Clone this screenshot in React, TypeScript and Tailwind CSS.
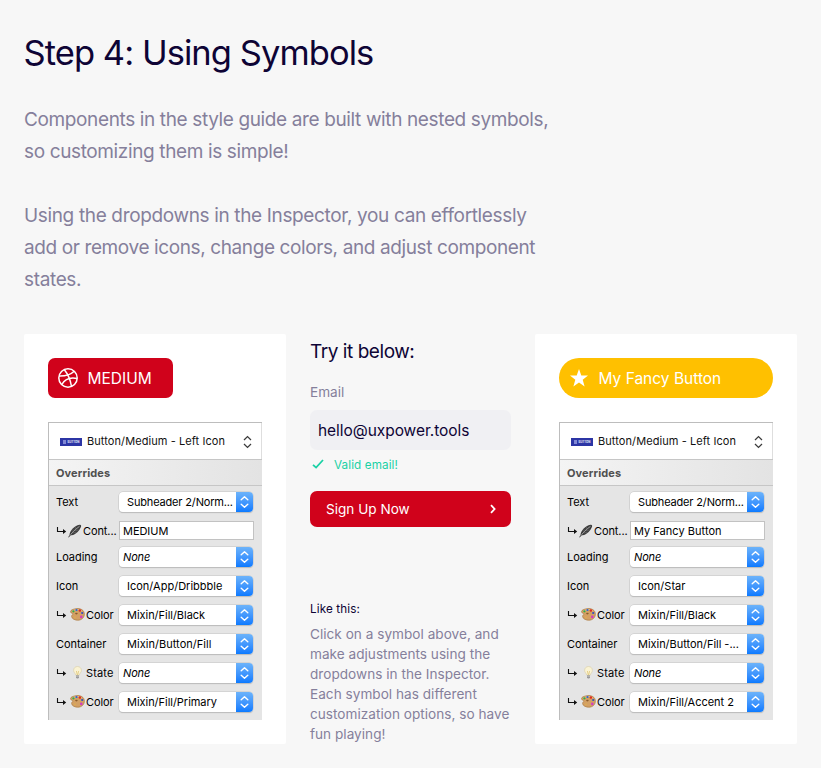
import type { ReactNode } from "react";

type Glyph = "feather" | "palette" | "bulb";

type Override = {
  label: string;
  value: string;
  glyph?: Glyph;
  kind?: "input" | "none";
  tracking?: string;
};

const buttonOverrides: Override[] = [
  { label: "Text", value: "Subheader 2/Norm...", tracking: "tracking-[-0.16px]" },
  { label: "Cont...", value: "MEDIUM", glyph: "feather", kind: "input", tracking: "tracking-[-0.05px]" },
  { label: "Loading", value: "None", kind: "none" },
  { label: "Icon", value: "Icon/App/Dribbble", tracking: "tracking-[0.01px]" },
  { label: "Color", value: "Mixin/Fill/Black", glyph: "palette" },
  { label: "Container", value: "Mixin/Button/Fill", tracking: "tracking-[0.04px]" },
  { label: "State", value: "None", glyph: "bulb", kind: "none" },
  { label: "Color", value: "Mixin/Fill/Primary", glyph: "palette" },
];

const fancyOverrides: Override[] = [
  { label: "Text", value: "Subheader 2/Norm...", tracking: "tracking-[-0.16px]" },
  { label: "Cont...", value: "My Fancy Button", glyph: "feather", kind: "input", tracking: "tracking-[0.03px]" },
  { label: "Loading", value: "None", kind: "none" },
  { label: "Icon", value: "Icon/Star", tracking: "tracking-[0.01px]" },
  { label: "Color", value: "Mixin/Fill/Black", glyph: "palette" },
  { label: "Container", value: "Mixin/Button/Fill -..." },
  { label: "State", value: "None", glyph: "bulb", kind: "none" },
  { label: "Color", value: "Mixin/Fill/Accent 2", glyph: "palette" },
];

function DribbbleIcon() {
  return (
    <svg width="20" height="20" viewBox="0 0 20 20" fill="none" stroke="#fff" strokeWidth="1.5">
      <circle cx="10" cy="10" r="9.2" />
      <path d="M6.4 1.7c3.4 4.3 5.9 9.7 7 16.3" />
      <path d="M1 8.1c6.200.2 11.400-1.200 15.200-4.800" />
      <path d="M3.700 16.600c3.100-5.200 8-7.600 15.400-6" />
    </svg>
  );
}

function StarIcon() {
  return (
    <svg width="20" height="20" viewBox="0 0 20 20" fill="#fff">
      <path d="M10 1l2.300 6.500 6.700.1-5.300 4.200 1.900 6.700L10 14.600l-5.600 3.900 1.900-6.700L1 7.600l6.700-.1z" />
    </svg>
  );
}

function CornerArrow() {
  return (
    <svg width="11" height="8" viewBox="0 0 11 8" className="shrink-0">
      <path d="M1.500 0v4.500h7" fill="none" stroke="#111" strokeWidth="1.100" />
      <path d="M7 2.100L10.200 4.500L7 6.900z" fill="#111" />
    </svg>
  );
}

function FeatherGlyph() {
  return (
    <svg width="14" height="14" viewBox="0 0 14 14" className="ml-px shrink-0">
      <path d="M1.500 11.500C1.500 7 6 1.800 11.500.700c1.600-.3 2 .8 1.400 2.300C11.500 6.500 8 10.600 3.500 11.300z" fill="#3c3c3c" />
      <path d="M.6 13.200C3 9.800 6.500 6 11.500 2.300" fill="none" stroke="#c8c8c8" strokeWidth=".7" />
      <path d="M.5 13.300l2-2.600" stroke="#333" strokeWidth=".9" />
      <path d="M5 8.800l3.500-.6M6.800 6.700l4-.7M4.800 8.500l.3-3.300M7 6.200l.6-3.100" stroke="#777" strokeWidth=".5" />
    </svg>
  );
}

function PaletteGlyph() {
  return (
    <svg width="15" height="13" viewBox="0 0 15 13" className="mb-[2px] ml-[3px] shrink-0">
      <path
        d="M6.500.6C10.500 0 14.400 2.200 14.400 6.200c0 3.400-2.900 6-6.600 6-3.100 0-6-1.400-6.200-3.700-.1-1.500 1.300-1.500 1.200-2.500C2.700 5 .5 5.300.5 3.700.5 2 3.500 1 6.500.6z"
        fill="#d3a064"
        stroke="#a47339"
        strokeWidth=".6"
      />
      <path d="M2 3.300C4 1.600 9 .8 12 3" fill="none" stroke="#eccb94" strokeWidth=".8" />
      <ellipse cx="6.400" cy="5.600" rx="1.300" ry=".8" fill="#8a5b2a" />
      <circle cx="3.400" cy="3.300" r="1.150" fill="#2fae4c" />
      <circle cx="6.500" cy="2" r="1.100" fill="#2b62d9" />
      <circle cx="9.900" cy="2.500" r="1.200" fill="#e02b22" />
      <circle cx="12.200" cy="5" r="1.100" fill="#2b4fc4" />
      <circle cx="11.300" cy="8.900" r="1.300" fill="#d43bc1" />
      <circle cx="5" cy="9.200" r=".8" fill="#e0b04c" />
    </svg>
  );
}

function BulbGlyph() {
  return (
    <svg width="9" height="13" viewBox="0 0 9 13" className="mr-[3px] mb-[2px] ml-[6px] shrink-0">
      <path d="M4.500.5C2.200.5.600 2.200.6 4.300c0 2.200 1.800 2.900 2.100 4.800h3.600c.3-1.900 2.100-2.600 2.100-4.800C8.400 2.200 6.800.5 4.500.5z" fill="#faf3d4" stroke="#d8cda4" strokeWidth=".6" />
      <path d="M3.400 5l.8 3.500h.6L5.600 5" fill="none" stroke="#d9b95a" strokeWidth=".6" />
      <path d="M3 9.200h3v2.100l-.8 1.100H3.800L3 11.300z" fill="#9b9b9b" />
      <path d="M3 10.300h3" stroke="#d5d5d5" strokeWidth=".5" />
    </svg>
  );
}

function OverrideLabel({ label, glyph }: { label: string; glyph?: Glyph }) {
  if (!glyph) {
    return <span className="w-[63px] shrink-0 tracking-[-0.04px] whitespace-nowrap">{label}</span>;
  }
  return (
    <span className="flex w-[63px] shrink-0 items-center whitespace-nowrap">
      <CornerArrow />
      {glyph === "feather" && <FeatherGlyph />}
      {glyph === "palette" && <PaletteGlyph />}
      {glyph === "bulb" && <BulbGlyph />}
      <span className={glyph === "feather" ? "ml-[1px] tracking-[-0.1px]" : glyph === "bulb" ? "ml-px tracking-[0.15px]" : "ml-px tracking-[-0.1px]"}>
        {label}
      </span>
    </span>
  );
}

function Row({ label, value, glyph, kind, tracking = "tracking-[-0.03px]" }: Override) {
  if (kind === "input") {
    return (
      <div className="mb-[7px] flex h-[19px] items-center">
        <OverrideLabel label={label} glyph={glyph} />
        <div className={`flex h-[19px] w-[135px] items-center border border-[#c2c2c2] bg-white pl-[3px] text-black ${tracking}`}>
          {value}
        </div>
      </div>
    );
  }
  return (
    <div className="mb-[9px] flex h-5 items-center">
      <OverrideLabel label={label} glyph={glyph} />
      <div className="flex h-5 w-[133.500px] overflow-hidden rounded-[4px] bg-white shadow-[0_0_0_0.5px_#c4c4c4,0_1px_1px_#b4b4b4]">
        <span
          className={`flex flex-1 items-center whitespace-nowrap text-black ${kind === "none" ? "pl-1 tracking-[-0.15px] italic" : `pl-2 ${tracking}`}`}
        >
          {value}
        </span>
        <span className="flex w-[16.500px] shrink-0 items-center justify-center bg-linear-to-b from-[#6cb3fa] to-[#087aff]">
          <svg width="9" height="14" viewBox="0 0 9 14" fill="none" stroke="#fff" strokeWidth="1.400">
            <path d="M1.200 4.700L4.500 1.700L7.800 4.700M1.200 9.300L4.500 12.300L7.800 9.300" strokeLinecap="round" strokeLinejoin="round" />
          </svg>
        </span>
      </div>
    </div>
  );
}

function Inspector({ overrides }: { overrides: Override[] }) {
  return (
    <div className="mt-6 h-[298px] w-[214px] border-t border-l border-[#bdbdbd] bg-[#e5e5e5] text-[11px] leading-[14px] text-black">
      <div className="flex h-9 items-center border-r border-[#dedede] bg-white pl-[11px]">
        <span className="mt-[2px] flex h-2 w-[22px] items-center justify-center gap-[2px] bg-[#2c35a5] text-[2.800px] leading-[8px] font-bold text-[#eceefc]">
          <svg width="3" height="4" viewBox="0 0 3 4">
            <path d="M0 0h3v4H0z" fill="#8087d4" />
          </svg>
          BUTTON
        </span>
        <span className="ml-[5px] flex-1 tracking-[0.080px] whitespace-nowrap text-[#111]">Button/Medium - Left Icon</span>
        <svg width="9" height="14" viewBox="0 0 9 14" fill="none" stroke="#3c3c3c" strokeWidth="1.300" className="mt-px mr-[9px]">
          <path d="M1 5L4.500 1.600L8 5M1 9L4.500 12.400L8 9" />
        </svg>
      </div>
      <div className="flex h-[27px] items-center border-y border-t-[#c6c6c6] border-b-[#c6c6c6] bg-linear-to-r from-[#f4f4f4] to-[#e3e3e3] pl-[7px] font-bold tracking-[0.12px] text-[#505050]">
        Overrides
      </div>
      <div className="pt-[6px] pl-[7px]">
        {overrides.map((o, i) => (
          <Row key={i} {...o} />
        ))}
      </div>
    </div>
  );
}

function Card({ children }: { children: ReactNode }) {
  return <section className="h-[410px] w-[262px] shrink-0 rounded-[2px] bg-white p-6">{children}</section>;
}

export default function App() {
  return (
    <main className="h-[768px] w-[821px] overflow-hidden bg-[#f7f7f7] px-6 pt-[29px] font-[Inter,'Liberation_Sans',sans-serif] text-[#0e0435]">
      <h1 className="-ml-[0.500px] text-[34.500px] leading-[48px] tracking-[-0.940px]">Step 4: Using Symbols</h1>

      <div className="mt-[27px] text-[19px] leading-8 text-[#857f9b]">
        <p className="tracking-[-0.370px]">
          Components in the style guide are built with nested symbols,
          <br />
          so customizing them is simple!
        </p>
        <p className="mt-8 tracking-[-0.350px]">
          Using the dropdowns in the Inspector, you can effortlessly
          <br />
          <span className="tracking-[-0.390px]">add or remove icons, change colors, and adjust component</span>
          <br />
          states.
        </p>
      </div>

      <div className="mt-[38px] flex gap-6">
        <Card>
          <button className="flex h-10 w-[125px] items-center rounded-[7px] bg-[#d0021b] pl-[10px] text-[15.500px] text-white">
            <DribbbleIcon />
            <span className="ml-[9.500px] pt-px">MEDIUM</span>
          </button>
          <Inspector overrides={buttonOverrides} />
        </Card>

        <div className="w-[201px] shrink-0 pt-[6px]">
          <h2 className="text-[19px] leading-6 tracking-[-0.450px]">Try it below:</h2>
          <div className="mt-[18px] text-[13.600px] leading-5 text-[#857f9b]">Email</div>
          <div className="mt-2 flex h-10 items-center rounded-[7px] bg-[#f0f0f3] pt-[2px] pl-2 text-[15.500px] tracking-[-0.050px]">
            hello@uxpower.tools
          </div>
          <div className="mt-[7px] flex h-4 items-center text-[11.700px] leading-4 tracking-[0.100px] text-[#1bd1a5]">
            <svg width="12" height="12" viewBox="0 0 12 12" fill="none" stroke="#1bd1a5" strokeWidth="1.800" className="mr-[10px] mb-[3px] ml-[2px]">
              <path d="M1 6.800L4.100 9.600L11 2" />
            </svg>
            Valid email!
          </div>
          <button className="mt-[18px] flex h-9 w-full items-center justify-between rounded-[7px] bg-[#d0021b] pr-[15px] pl-4 text-[13.600px] tracking-normal text-white">
            Sign Up Now
            <svg width="6" height="10" viewBox="0 0 6 10" fill="none" stroke="#fff" strokeWidth="1.800">
              <path d="M1 1.200L4.600 5L1 8.800" />
            </svg>
          </button>
          <div className="mt-[74px] text-[11.700px] leading-4 tracking-[0.120px]">Like this:</div>
          <p className="mt-[7px] text-[13.600px] leading-5 tracking-[0.020px] text-[#857f9b]">
            Click on a symbol above, and
            <br />
            make adjustments using the
            <br />
            dropdowns in the Inspector.
            <br />
            Each symbol has different
            <br />
            customization options, so have
            <br />
            fun playing!
          </p>
        </div>

        <Card>
          <button className="flex h-10 w-[214px] items-center rounded-full bg-[#ffc000] pl-[10px] text-[15.500px] text-white">
            <StarIcon />
            <span className="ml-[9.500px] pt-px">My Fancy Button</span>
          </button>
          <Inspector overrides={fancyOverrides} />
        </Card>
      </div>
    </main>
  );
}
